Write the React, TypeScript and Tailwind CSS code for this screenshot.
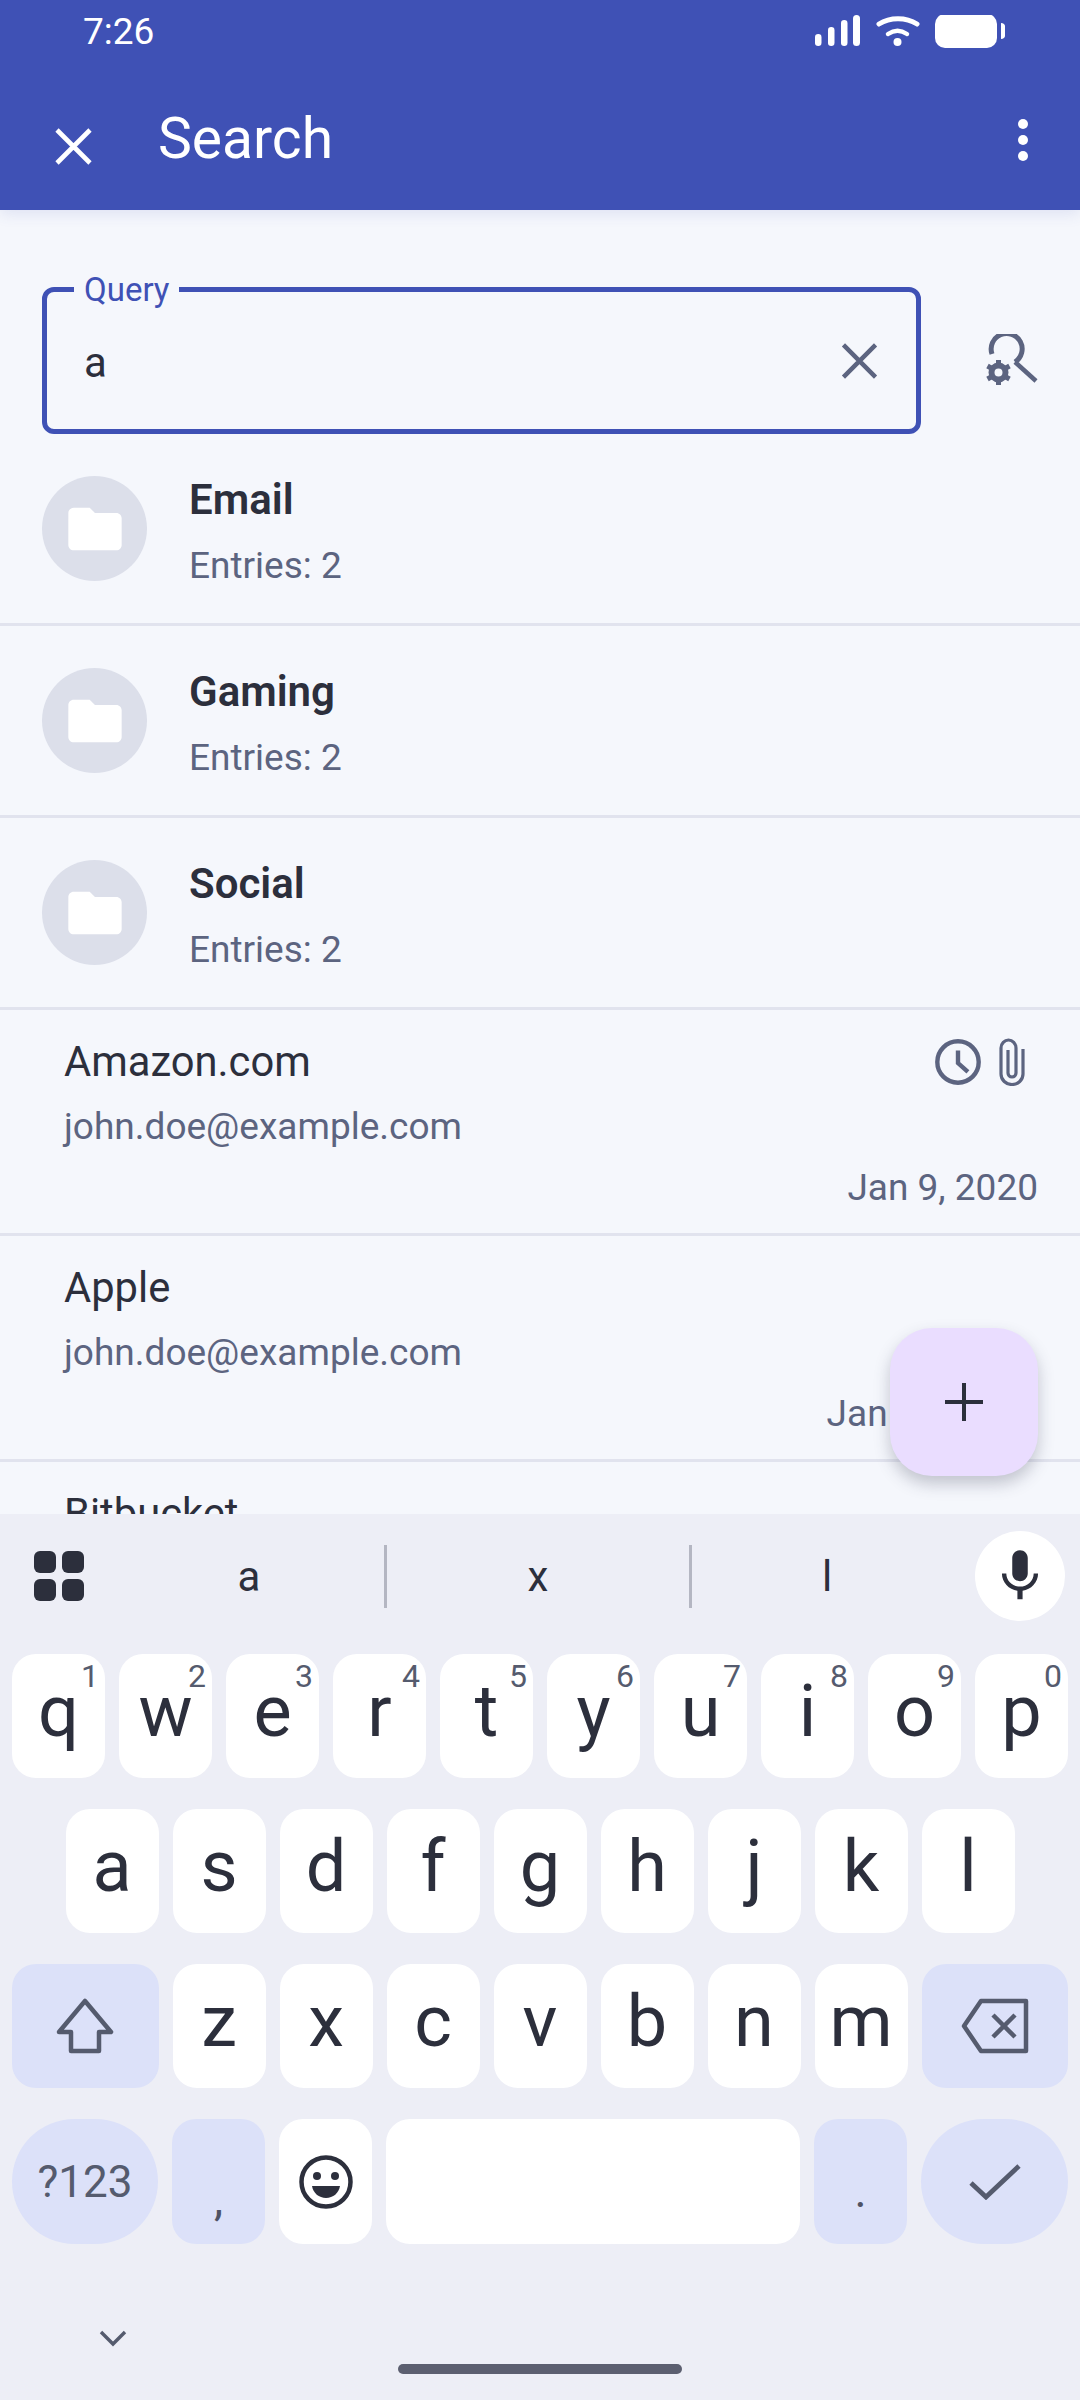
import React from "react";

const SANS = "font-['Roboto',sans-serif]";

function CloseIcon({ className }: { className: string }) {
  return (
    <svg viewBox="0 0 37 37" className={className} fill="none" stroke="currentColor" strokeWidth="4.6">
      <path d="M2 2l33 33M35 2L2 35" />
    </svg>
  );
}

function FolderIcon() {
  return (
    <svg viewBox="0 0 24 24" className="w-[64px] h-[64px]" fill="#ffffff">
      <path d="M10 4H4c-1.1 0-2 .9-2 2v12c0 1.1.9 2 2 2h16c1.1 0 2-.9 2-2V8c0-1.1-.9-2-2-2h-8l-2-2z" />
    </svg>
  );
}

function FolderRow({ name }: { name: string }) {
  return (
    <div className="h-[192px] flex items-center pl-[42px] border-b-[3px] border-[#e1e3ee]">
      <div className="w-[105px] h-[105px] rounded-full bg-[#dcdfea] flex items-center justify-center">
        <FolderIcon />
      </div>
      <div className="ml-[42px] pt-[6px] flex flex-col">
        <span className="text-[42px] leading-[50px] font-semibold text-[#2c2f3c]">{name}</span>
        <span className="text-[37px] leading-[44px] mt-[19px] text-[#5c6480]">Entries: 2</span>
      </div>
    </div>
  );
}

function EntryRow({ title, date, icons }: { title: string; date: string; icons?: boolean }) {
  return (
    <div className="h-[226px] pl-[64px] pr-[42px] pt-[27px] border-b-[3px] border-[#e1e3ee] flex flex-col">
      <div className="flex justify-between h-[50px]">
        <span className="text-[41.700px] leading-[50px] text-[#2c2f3c]">{title}</span>
        {icons && (
          <div className="flex items-center gap-[18px] pr-[13px] text-[#5c6480]">
            <svg viewBox="0 0 44 44" className="w-[46px] h-[46px]" fill="none" stroke="currentColor" strokeWidth="4.2">
              <circle cx="22" cy="22" r="19.8" />
              <path d="M22 11v12l9.5 8.5" />
            </svg>
            <svg viewBox="0 0 26 48" className="w-[26px] h-[48px]" fill="none" stroke="currentColor" strokeWidth="3.2">
              <path d="M24 11v25c0 6-5 10.500-11 10.500S2 42 2 36V10c0-4.500 3.500-8 7.500-8S17 5.500 17 10v25c0 2.300-1.700 4-4 4s-4-1.700-4-4V12" />
            </svg>
          </div>
        )}
      </div>
      <span className="text-[37px] leading-[44px] mt-[18px] text-[#5c6480]">john.doe@example.com</span>
      <span className="text-[37px] leading-[44px] mt-[17px] text-right text-[#5c6480]">{date}</span>
    </div>
  );
}

function Key({ label, hint }: { label: string; hint?: string }) {
  return (
    <div className="relative w-[93px] h-[124px] rounded-[24px] bg-white flex items-center justify-center text-[72px] text-[#2c2f3c]">
      <span className="leading-none -translate-y-[4px]">{label}</span>
      {hint && (
        <span className="absolute top-[5px] right-[6px] text-[32px] leading-[34px] text-[#555b6e]">{hint}</span>
      )}
    </div>
  );
}

const ROW_ONE = [
  ["q", "1"],
  ["w", "2"],
  ["e", "3"],
  ["r", "4"],
  ["t", "5"],
  ["y", "6"],
  ["u", "7"],
  ["i", "8"],
  ["o", "9"],
  ["p", "0"],
];

function Keyboard() {
  return (
    <div className="h-[886px] bg-[#edeef6] relative z-20">
      {/* suggestions */}
      <div className="h-[140px] flex items-center pl-[34px] pb-[16px]">
        <div className="grid grid-cols-2 gap-[6px] w-[50px]">
          <div className="h-[22px] rounded-[6px] bg-[#2c2f3c]" />
          <div className="h-[22px] rounded-[6px] bg-[#2c2f3c]" />
          <div className="h-[22px] rounded-[6px] bg-[#2c2f3c]" />
          <div className="h-[22px] rounded-[6px] bg-[#2c2f3c]" />
        </div>
        <div className="ml-[27px] w-[276px] h-[63px] pl-[3px] flex items-center justify-center border-r-[3px] border-[#b4b6c2] text-[42px] text-[#2c2f3c]">a</div>
        <div className="w-[305px] h-[63px] flex items-center justify-center border-r-[3px] border-[#b4b6c2] text-[42px] text-[#2c2f3c]">x</div>
        <div className="w-[268px] h-[63px] pl-[2px] flex items-center justify-center text-[42px] text-[#2c2f3c]">l</div>
        <div className="ml-[15px] w-[90px] h-[90px] rounded-full bg-white flex items-center justify-center">
          <svg viewBox="0 0 24 24" className="w-[62px] h-[62px]" fill="#2c2f3c">
            <path d="M12 14c1.660 0 3-1.340 3-3V5c0-1.660-1.340-3-3-3S9 3.340 9 5v6c0 1.660 1.340 3 3 3zm5.300-3c0 3-2.540 5.100-5.300 5.100S6.700 14 6.700 11H5c0 3.410 2.720 6.230 6 6.720V21h2v-3.280c3.280-.48 6-3.300 6-6.720h-1.700z" />
          </svg>
        </div>
      </div>

      {/* keys */}
      <div className="flex flex-col gap-[31px] px-[12px]">
        <div className="flex gap-[14px]">
          {ROW_ONE.map(([k, h]) => (
            <Key key={k} label={k} hint={h} />
          ))}
        </div>
        <div className="flex gap-[14px] justify-center">
          {"asdfghjkl".split("").map((k) => (
            <Key key={k} label={k} />
          ))}
        </div>
        <div className="flex gap-[14px]">
          <div className="flex-1 h-[124px] rounded-[24px] bg-[#dce1f9] flex items-center justify-center">
            <svg viewBox="0 0 58 56" className="w-[58px] h-[56px]" fill="none" stroke="#555b6e" strokeWidth="4.500" strokeLinejoin="round">
              <path d="M29 3L55 34H43V53H15V34H3Z" />
            </svg>
          </div>
          {"zxcvbnm".split("").map((k) => (
            <Key key={k} label={k} />
          ))}
          <div className="flex-1 h-[124px] rounded-[24px] bg-[#dce1f9] flex items-center justify-center">
            <svg viewBox="0 0 68 56" className="w-[68px] h-[56px]" fill="none" stroke="#555b6e" strokeWidth="4.500" strokeLinejoin="round">
              <path d="M20 3H65V53H20L3 28Z" />
              <path d="M32 17l22 22M54 17L32 39" />
            </svg>
          </div>
        </div>
        <div className="flex gap-[14px]">
          <div className="w-[146px] h-[125px] rounded-full bg-[#dce1f9] flex items-center justify-center text-[44px] text-[#555b6e]">?123</div>
          <div className="w-[93px] h-[125px] rounded-[24px] bg-[#dce1f9] flex justify-center items-end pb-[22px] text-[46px] leading-none text-[#4f5364]">,</div>
          <div className="w-[93px] h-[125px] rounded-[24px] bg-white flex items-center justify-center">
            <svg viewBox="0 0 54 54" className="w-[54px] h-[54px]">
              <circle cx="27" cy="27" r="24.500" fill="none" stroke="#2c2f3c" strokeWidth="4.500" />
              <circle cx="18" cy="21" r="4" fill="#2c2f3c" />
              <circle cx="36" cy="21" r="4" fill="#2c2f3c" />
              <path d="M13 31h28c-1 7-7 12-14 12s-13-5-14-12z" fill="#2c2f3c" />
            </svg>
          </div>
          <div className="flex-1 h-[125px] rounded-[24px] bg-white" />
          <div className="w-[93px] h-[125px] rounded-[24px] bg-[#dce1f9] flex justify-center items-end pb-[30px] text-[46px] leading-none text-[#4f5364]">.</div>
          <div className="w-[147px] h-[125px] rounded-full bg-[#dce1f9] flex items-center justify-center">
            <svg viewBox="0 0 52 36" className="w-[52px] h-[36px]" fill="none" stroke="#555b6e" strokeWidth="4.800">
              <path d="M2 19l15 14L50 2" />
            </svg>
          </div>
        </div>
      </div>

      {/* chevron + gesture pill */}
      <div className="relative h-[120px]">
        <svg viewBox="0 0 28 17" className="absolute left-[99px] top-[86px] w-[28px] h-[17px]" fill="none" stroke="#555b6e" strokeWidth="3.400">
          <path d="M2 2l12 12L26 2" />
        </svg>
        <div className="absolute left-[398px] top-[120px] w-[284px] h-[10px] rounded-full bg-[#5c5f70]" />
      </div>
    </div>
  );
}

export default function App() {
  return (
    <div className={`${SANS} w-[1080px] h-[2400px] flex flex-col overflow-hidden bg-[#f5f7fc]`}>
      {/* status bar + app bar */}
      <header className="h-[210px] shrink-0 bg-[#3f51b5] text-white relative z-10 shadow-[0_4px_14px_rgba(63,81,181,0.12)]">
        <div className="h-[64px] flex items-center pl-[83px] pr-[75px] justify-between">
          <span className="text-[37px] leading-[64px]">7:26</span>
          <svg viewBox="0 0 190 36" className="w-[190px] h-[36px] mt-[1px]" fill="#ffffff">
            <rect x="0" y="19" width="6.500" height="12" rx="3.200" />
            <rect x="13" y="12" width="6.500" height="19" rx="3.200" />
            <rect x="26" y="5" width="6.500" height="26" rx="3.200" />
            <rect x="38" y="0" width="7" height="31" rx="3.500" />
            <path d="M64 9c11-7 27-7 38 0" fill="none" stroke="#ffffff" strokeWidth="5" strokeLinecap="round" />
            <path d="M73 19c6-4 13-4 19 0" fill="none" stroke="#ffffff" strokeWidth="4.500" strokeLinecap="round" />
            <circle cx="82.500" cy="27" r="4" />
            <rect x="120" y="-1" width="62" height="34" rx="10" />
            <path d="M186 8c2.500 0 4 1.500 4 3v10c0 1.500-1.500 3-4 3z" />
          </svg>
        </div>
        <div className="h-[146px] flex items-center pl-[55px] pr-[52px]">
          <CloseIcon className="w-[37px] h-[37px] mt-[18px]" />
          <span className="ml-[66px] text-[57px] leading-[60px] mt-[4px]">Search</span>
          <div className="ml-auto flex flex-col gap-[6px] mt-[6px]">
            <div className="w-[10px] h-[10px] rounded-full bg-white" />
            <div className="w-[10px] h-[10px] rounded-full bg-white" />
            <div className="w-[10px] h-[10px] rounded-full bg-white" />
          </div>
        </div>
      </header>

      {/* content */}
      <main className="relative flex-1 overflow-hidden">
        <div className="flex items-center pl-[42px] pt-[77px]">
          <div className="relative w-[879px] h-[147px] rounded-[12px] border-[5px] border-[#3f51b5] flex items-center pl-[37px] pr-[38px] justify-between">
            <span className="absolute -top-[19px] left-[27px] px-[10px] bg-[#f5f7fc] text-[33px] leading-[34px] text-[#3f51b5]">Query</span>
            <span className="text-[42px] leading-[50px] mt-[4px] text-[#2c2f3c]">a</span>
            <CloseIcon className="w-[37px] h-[36px] text-[#5c6480]" />
          </div>
          <svg viewBox="0 0 52 52" className="ml-[65px] -mt-[2px] w-[52px] h-[52px] text-[#5c6480]" fill="none">
            <path d="M6 20A15.500 15.500 0 1 1 29 28" stroke="currentColor" strokeWidth="5" />
            <path d="M29 28l21 19" stroke="currentColor" strokeWidth="4.500" />
            <circle cx="12.500" cy="38.500" r="7" stroke="currentColor" strokeWidth="6" />
            <path d="M12.500 26v5M12.500 46v5M1.500 32l4.500 2.500M19 42.500l4.500 2.500M1.500 45L6 42.500M19 34.500l4.500-2.500" stroke="currentColor" strokeWidth="5" />
          </svg>
        </div>

        <div>
          <FolderRow name="Email" />
          <FolderRow name="Gaming" />
          <FolderRow name="Social" />
          <EntryRow title="Amazon.com" date="Jan 9, 2020" icons />
          <EntryRow title="Apple" date="Jan 10, 2020" />
          <EntryRow title="Bitbucket" date="Jan 9, 2020" />
        </div>

        {/* fab */}
        <div className="absolute left-[890px] top-[1118px] w-[148px] h-[148px] rounded-[42px] bg-[#eaddff] flex items-center justify-center shadow-[0_8px_16px_rgba(60,64,90,0.28)]">
          <svg viewBox="0 0 38 38" className="w-[38px] h-[38px]" fill="none" stroke="#2c2f3c" strokeWidth="4">
            <path d="M19 0v38M0 19h38" />
          </svg>
        </div>
      </main>

      <Keyboard />
    </div>
  );
}
